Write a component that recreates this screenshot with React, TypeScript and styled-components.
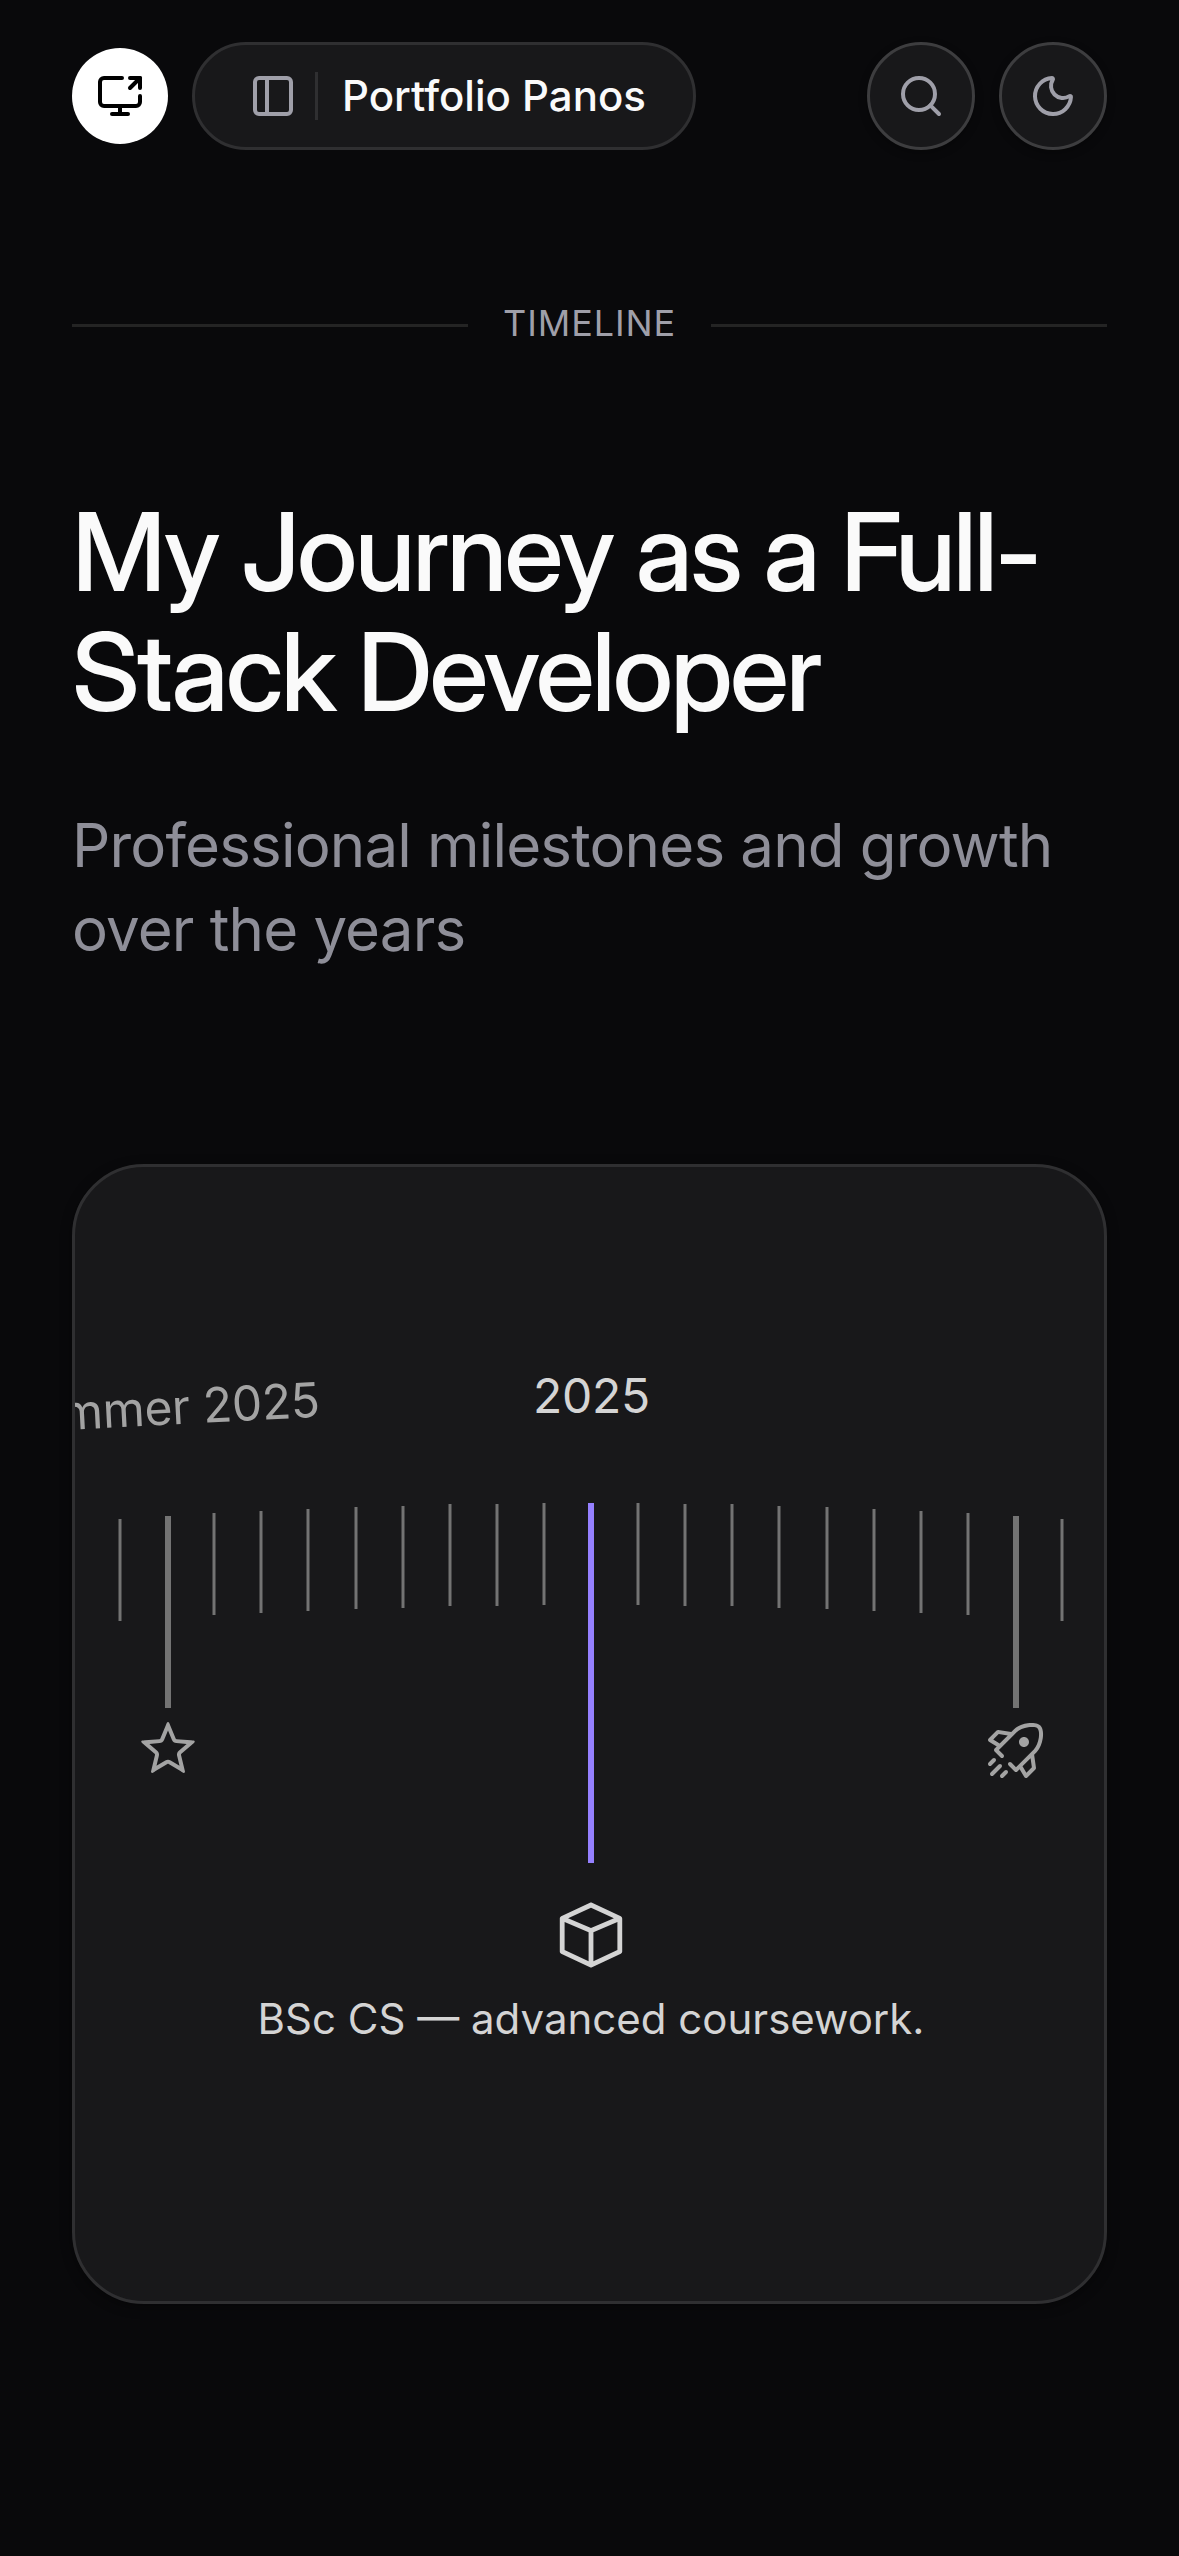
import React from "react";
import styled, { createGlobalStyle } from "styled-components";
import { ScreenShare, PanelLeft, Search, Moon } from "lucide-react";
import { RxStar, RxRocket, RxCube } from "react-icons/rx";

const GlobalStyle = createGlobalStyle`
  *, *::before, *::after { box-sizing: border-box; }
  body {
    margin: 0;
    background: #09090b;
    color: #fafafa;
    font-family: Inter, "Liberation Sans", sans-serif;
    -webkit-font-smoothing: antialiased;
  }
`;

const Page = styled.div`
  min-height: 2556px;
  padding: 42px 72px 0;
  overflow: hidden;
`;

const Header = styled.header`
  display: flex;
  align-items: center;
  gap: 24px;
  height: 108px;
`;

const Logo = styled.div`
  display: flex;
  align-items: center;
  justify-content: center;
  width: 96px;
  height: 96px;
  border-radius: 50%;
  background: #ffffff;
  color: #000000;
`;

const NavPill = styled.div`
  display: flex;
  align-items: center;
  width: 504px;
  height: 108px;
  padding-left: 54px;
  border: 3px solid #2f2f31;
  border-radius: 54px;
  background: #18181a;
  color: #9f9fa9;
  margin-right: auto;
`;

const NavDivider = styled.span`
  width: 3px;
  height: 48px;
  margin: 0 24px 0 18px;
  background: #2f2f31;
`;

const NavTitle = styled.span`
  color: #fafafa;
  font-size: 42px;
  font-weight: 500;
  line-height: 60px;
  white-space: nowrap;
`;

const RoundButton = styled.button`
  display: flex;
  align-items: center;
  justify-content: center;
  width: 108px;
  height: 108px;
  padding: 0;
  border: 3px solid #3d3d3f;
  border-radius: 50%;
  background: #18181a;
  color: #9f9fa9;
  box-shadow: 0 3px 9px rgba(0, 0, 0, 0.3);
`;

const SectionLabel = styled.div`
  display: flex;
  align-items: center;
  gap: 36px;
  margin-top: 150px;
  height: 51px;
  &::before,
  &::after {
    content: "";
    flex: 1;
    height: 3px;
    background: #242424;
  }
`;

const SectionText = styled.span`
  width: 171px;
  padding-bottom: 6px;
  color: #9f9fa9;
  font-size: 36px;
  line-height: 48px;
  letter-spacing: 0.9px;
  white-space: nowrap;
  text-indent: -1px;
`;

const Title = styled.h1`
  margin: 141px 0 0;
  font-family: "Inter Display", Inter, "Liberation Sans", sans-serif;
  font-size: 108px;
  font-weight: 500;
  line-height: 120px;
  letter-spacing: -2.7px;
`;

const Subtitle = styled.p`
  margin: 71px 0 0;
  color: #8e8e98;
  font-size: 60px;
  line-height: 84px;
  letter-spacing: -0.82px;
`;

const Card = styled.section`
  position: relative;
  height: 1140px;
  margin-top: 193px;
  border: 3px solid #2f2f31;
  border-radius: 72px;
  background: #18181a;
  overflow: hidden;
`;

const CardShadow = styled.div`
  border-radius: 72px;
  box-shadow: 0 3px 12px rgba(0, 0, 0, 0.4);
`;

const Tick = styled.span<{ $kind: TickKind }>`
  position: absolute;
  width: ${({ $kind }) => ($kind === "minor" ? 3 : 6)}px;
  height: ${({ $kind }) => ({ minor: 102, major: 192, active: 360 })[$kind]}px;
  background: ${({ $kind }) => ($kind === "active" ? "#9580ff" : "#737373")};
  transform: translateX(-50%);
`;

const YearLabel = styled.span<{ $active?: boolean }>`
  position: absolute;
  font-size: 48px;
  line-height: 60px;
  letter-spacing: -0.3px;
  white-space: nowrap;
  color: ${({ $active }) => ($active ? "#d4d4d4" : "#a3a3a3")};
`;

const Marker = styled.span<{ $active?: boolean }>`
  position: absolute;
  display: flex;
  font-size: ${({ $active }) => ($active ? 72 : 60)}px;
  color: ${({ $active }) => ($active ? "#d4d4d4" : "#a3a3a3")};
  transform: translate(-50%, -50%);
`;

const Description = styled.p`
  position: absolute;
  left: 3px;
  right: 0;
  top: 822px;
  margin: 0;
  color: #d4d4d4;
  font-size: 42px;
  line-height: 60px;
  text-align: center;
  white-space: nowrap;
`;

type TickKind = "minor" | "major" | "active";

const CENTER_X = 516;
const DIAL_TOP = 336;
const STEP = 47.1;

const ticks = Array.from({ length: 21 }, (_, i) => {
  const d = i - 10;
  const kind: TickKind = d === 0 ? "active" : Math.abs(d) === 9 ? "major" : "minor";
  return { d, kind, x: CENTER_X + d * STEP + (kind === "major" ? 0.7 : 0), y: DIAL_TOP + 0.16 * d * d };
});

export default function App() {
  return (
    <>
      <GlobalStyle />
      <Page>
        <Header>
          <Logo>
            <ScreenShare size={48} />
          </Logo>
          <NavPill>
            <PanelLeft size={48} />
            <NavDivider />
            <NavTitle>Portfolio Panos</NavTitle>
          </NavPill>
          <RoundButton aria-label="Search">
            <Search size={48} />
          </RoundButton>
          <RoundButton aria-label="Toggle theme">
            <Moon size={48} />
          </RoundButton>
        </Header>
        <SectionLabel>
          <SectionText>TIMELINE</SectionText>
        </SectionLabel>
        <Title>My Journey as a Full-Stack Developer</Title>
        <Subtitle>Professional milestones and growth over the years</Subtitle>
        <CardShadow>
          <Card>
            {ticks.map((t) => (
              <Tick key={t.d} $kind={t.kind} style={{ left: t.x, top: t.y }} />
            ))}
            <YearLabel style={{ left: 86, top: 241, transform: "translate(-50%, -50%) rotate(-3deg)" }}>
              Summer 2025
            </YearLabel>
            <YearLabel $active style={{ left: 516.5, top: 229, transform: "translate(-50%, -50%)" }}>
              2025
            </YearLabel>
            <Marker style={{ left: 93, top: 583 }}>
              <RxStar />
            </Marker>
            <Marker style={{ left: 941, top: 583 }}>
              <RxRocket />
            </Marker>
            <Marker $active style={{ left: 516, top: 768 }}>
              <RxCube />
            </Marker>
            <Description>BSc CS — advanced coursework.</Description>
          </Card>
        </CardShadow>
      </Page>
    </>
  );
}
